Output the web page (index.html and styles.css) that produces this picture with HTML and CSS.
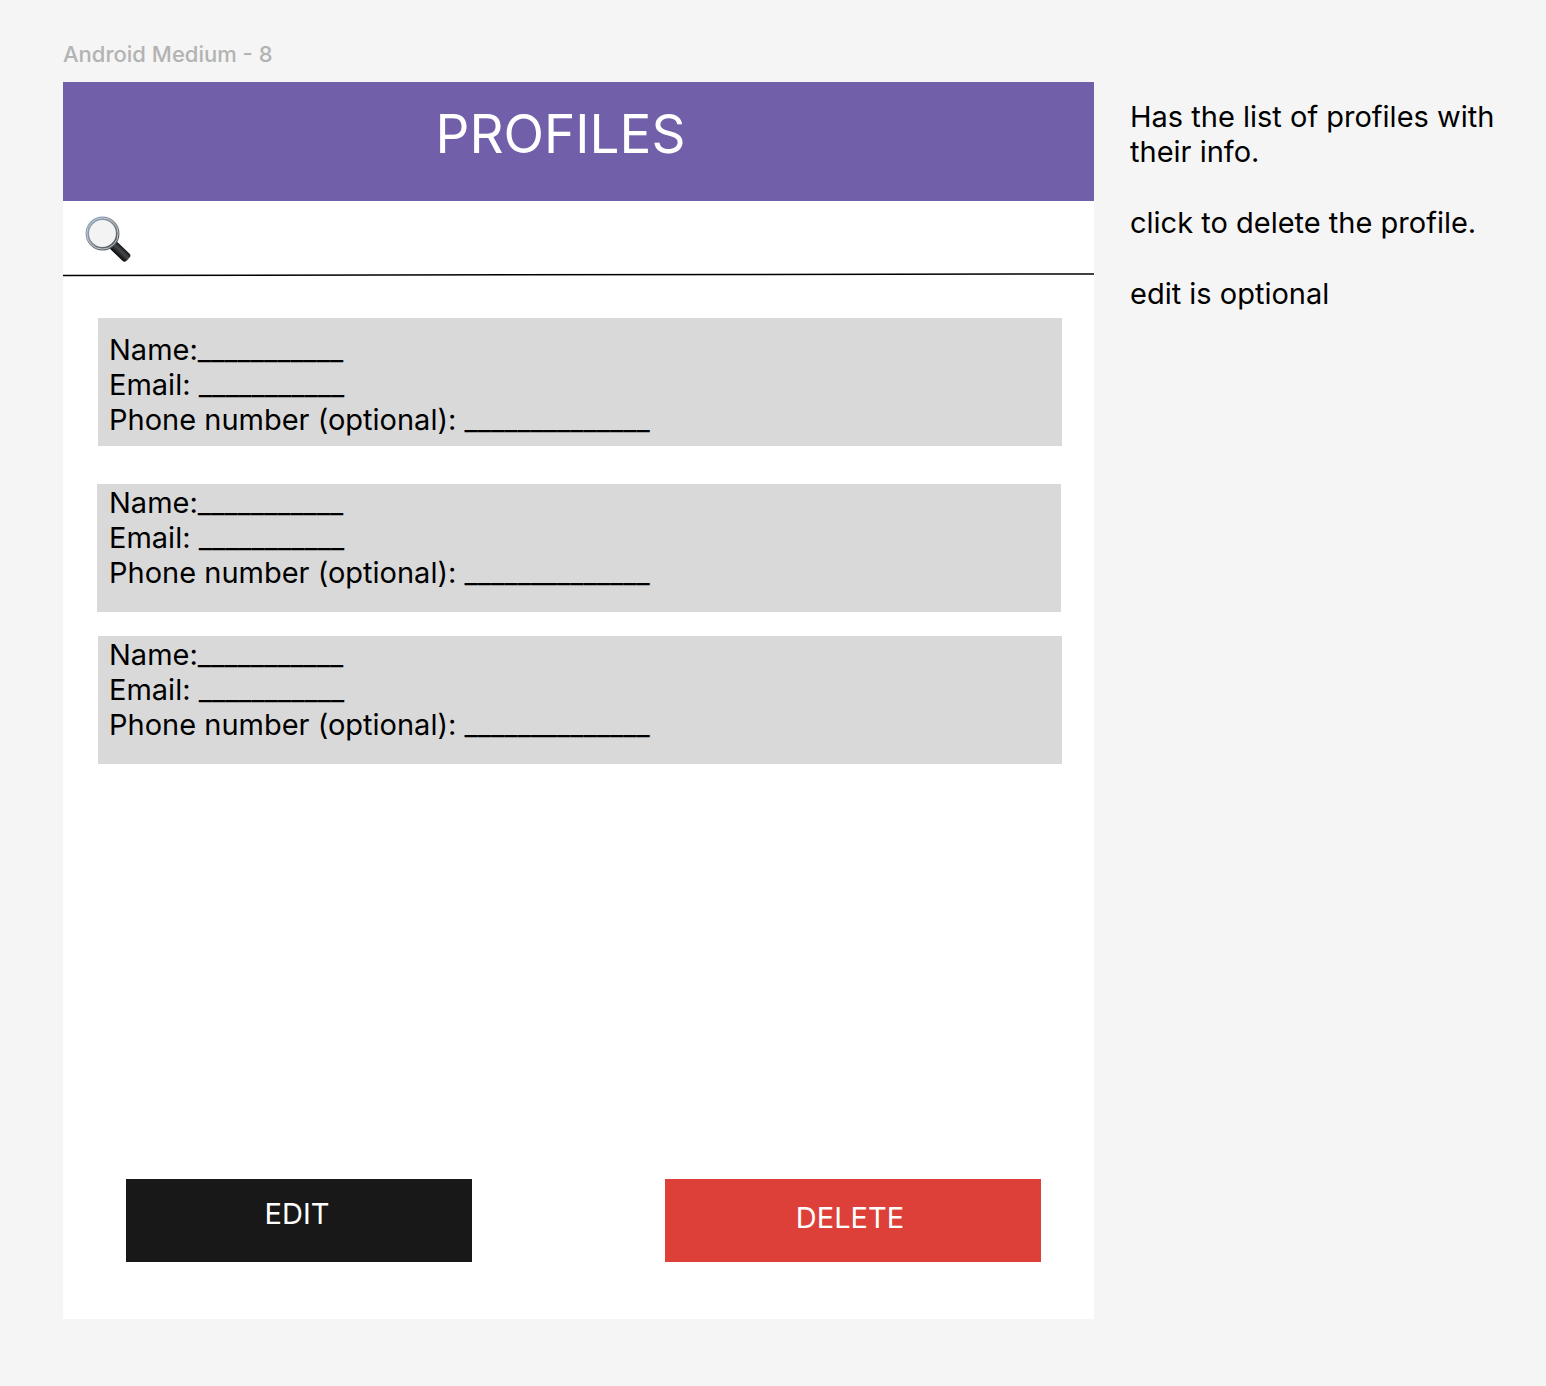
FILE: index.html
```html
<!DOCTYPE html>
<html lang="en">
<head>
<meta charset="utf-8">
<title>Profiles</title>
<link rel="stylesheet" href="styles.css">
</head>
<body>
<div class="board">
  <section class="frame">
    <p class="frame-label">Android Medium - 8</p>
    <main class="screen">
      <header class="app-bar"><h1>PROFILES</h1></header>
      <div class="search">
        <label for="search" class="search-icon" aria-label="Search">
          <svg viewBox="0 0 48 48" width="48" height="48" aria-hidden="true">
            <defs>
              <linearGradient id="rim" x1="0" y1="0" x2="1" y2="1">
                <stop offset="0" stop-color="#8fa9c6"/><stop offset=".5" stop-color="#85898e"/><stop offset="1" stop-color="#3f4347"/>
              </linearGradient>
              <linearGradient id="grip" x1="0" y1="0" x2="0" y2="1">
                <stop offset="0" stop-color="#151515"/><stop offset=".4" stop-color="#45494c"/><stop offset="1" stop-color="#0a0a0a"/>
              </linearGradient>
            </defs>
            <path d="M27 28l5 5" stroke="#666" stroke-width="5"/>
            <rect x="27" y="-4" width="22" height="10" rx="3" transform="translate(8.500 8.500) rotate(44)" fill="url(#grip)"/>
            <circle cx="17.500" cy="17.500" r="15.200" fill="#f3f3f3" stroke="url(#rim)" stroke-width="3.500"/>
            <circle cx="17.500" cy="17.500" r="15.600" fill="none" stroke="#c3cad1" stroke-width="1"/>
          </svg>
        </label>
        <input id="search" class="search-input" type="search">
      </div>
      <svg class="rule" viewBox="0 0 1031 4" preserveAspectRatio="none" aria-hidden="true"><path d="M0 2.500L1031 1" stroke="#000" stroke-width="1.500"/></svg>
      <div class="profiles">
        <article class="profile profile-first">
          <p>Name:___________</p>
          <p>Email: ___________</p>
          <p>Phone number (optional): ______________</p>
        </article>
        <article class="profile profile-second">
          <p>Name:___________</p>
          <p>Email: ___________</p>
          <p>Phone number (optional): ______________</p>
        </article>
        <article class="profile">
          <p>Name:___________</p>
          <p>Email: ___________</p>
          <p>Phone number (optional): ______________</p>
        </article>
      </div>
      <div class="actions">
        <button type="button" class="btn edit">EDIT</button>
        <button type="button" class="btn delete">DELETE</button>
      </div>
    </main>
  </section>
  <aside class="notes">
    <p>Has the list of profiles with their info.</p>
    <p>click to delete the profile.</p>
    <p>edit is optional</p>
  </aside>
</div>
</body>
</html>
```
FILE: styles.css
```css
* { box-sizing: border-box; }
body {
  margin: 0;
  min-height: 100vh;
  background: #f5f5f5;
  color: #000;
  font-family: Inter, "Liberation Sans", sans-serif;
  font-size: 29px;
  line-height: 35px;
}
p, h1 { margin: 0; font-weight: 400; }
.board {
  display: grid;
  grid-template-columns: minmax(0, 1031fr) minmax(0, 380fr);
  column-gap: 36px;
  min-height: 100vh;
  padding: 40px 36px 67px 63px;
}
.frame { display: flex; flex-direction: column; }
.frame-label {
  height: 42px;
  font-size: 22px;
  line-height: 28px;
  font-weight: 500;
  color: #b3b3b3;
}
.screen { flex: 1; display: flex; flex-direction: column; background: #fff; }
.app-bar {
  height: 119px;
  padding: 20px 36px 0 0;
  background: #725faa;
  color: #fff;
  text-align: center;
}
.app-bar h1 { font-size: 53px; line-height: 64px; }
.search { display: flex; align-items: center; height: 72px; padding: 6px 22px 0; }
.search-icon { display: flex; }
.search-input {
  flex: 1;
  height: 48px;
  border: 0;
  outline: 0;
  background: transparent;
  font: inherit;
}
.rule { display: block; width: 100%; height: 4px; }
.profiles { display: flex; flex-direction: column; padding: 41px 32px 0 35px; }
.profile { min-height: 128px; margin-bottom: 24px; padding: 1px 11px 0; background: #d9d9d9; }
.profile-first { padding-top: 14px; margin-bottom: 38px; }
.profile-second { margin-left: -1px; margin-right: 1px; padding-left: 12px; }
.actions {
  display: grid;
  grid-template-columns: 346fr 376fr;
  column-gap: 193px;
  margin-top: auto;
  padding: 0 53px 57px 63px;
}
.btn {
  height: 83px;
  border: 0;
  padding: 0;
  color: #fff;
  font: inherit;
}
.edit { background: #181818; padding: 0 4px 14px 0; }
.delete { background: #dd4039; padding: 0 6px 6px 0; }
.notes { display: flex; flex-direction: column; gap: 36px; padding-top: 59px; }
```
